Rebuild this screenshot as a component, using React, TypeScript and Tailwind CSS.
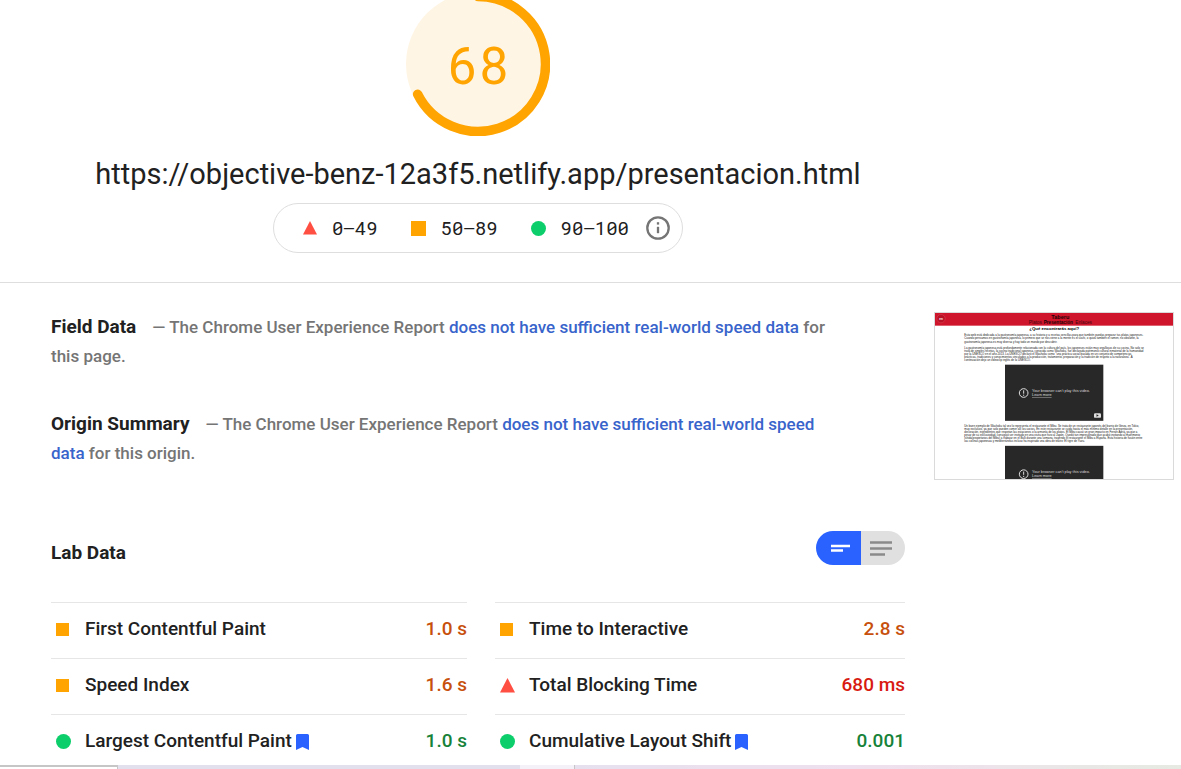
import React from "react";

type Rating = "good" | "average" | "poor";

type Metric = {
  name: string;
  value: string;
  rating: Rating;
  vital?: boolean;
};

const leftMetrics: Metric[] = [
  { name: "First Contentful Paint", value: "1.0 s", rating: "average" },
  { name: "Speed Index", value: "1.6 s", rating: "average" },
  { name: "Largest Contentful Paint", value: "1.0 s", rating: "good", vital: true },
];

const rightMetrics: Metric[] = [
  { name: "Time to Interactive", value: "2.8 s", rating: "average" },
  { name: "Total Blocking Time", value: "680 ms", rating: "poor" },
  { name: "Cumulative Layout Shift", value: "0.001", rating: "good", vital: true },
];

const valueColor: Record<Rating, string> = {
  good: "text-[#178239]",
  average: "text-[#c7500d]",
  poor: "text-[#d81b12]",
};

function RatingMark({ rating }: { rating: Rating }) {
  return (
    <svg viewBox="0 0 15 15" className="size-full" aria-hidden="true">
      {rating === "poor" && <path d="M7.5 0L15 14.5H0z" fill="#ff4e42" />}
      {rating === "average" && <path d="M0 0h15v15H0z" fill="#ffa400" />}
      {rating === "good" && <circle cx="7.5" cy="7.5" r="7.5" fill="#0cce6b" />}
    </svg>
  );
}

function Gauge() {
  return (
    <div className="relative -mt-2 size-36">
      <svg viewBox="0 0 144 144" className="size-full" aria-hidden="true">
        <circle cx="72" cy="72" r="72" fill="#fff5e4" />
        <path
          d="M72 4.5A67.5 67.5 0 1 1 11.6 102.2"
          fill="none"
          stroke="#ffa400"
          strokeWidth="9.5"
          strokeLinecap="round"
        />
      </svg>
      <div className="absolute inset-0 flex items-center justify-center font-['Roboto_Mono','DejaVu_Sans_Mono',monospace] text-[51px] leading-none text-[#ffa400]">
        68
      </div>
    </div>
  );
}

function Legend() {
  const items: { rating: Rating; label: string; size: string }[] = [
    { rating: "poor", label: "0–49", size: "size-[14px]" },
    { rating: "average", label: "50–89", size: "size-[15px]" },
    { rating: "good", label: "90–100", size: "size-[15px]" },
  ];
  return (
    <div className="mt-[11px] flex h-[50px] items-center rounded-full border border-[#dedede] pr-3 pl-[29px]">
      <ul className="flex items-center gap-[33px]">
        {items.map((item) => (
          <li key={item.label} className="flex items-center gap-[15px]">
            <span className={item.size}>
              <RatingMark rating={item.rating} />
            </span>
            <span className="font-['Roboto_Mono','DejaVu_Sans_Mono',monospace] text-[19px] leading-6">
              {item.label}
            </span>
          </li>
        ))}
      </ul>
      <button type="button" aria-label="About the score" className="ml-[17px] size-6">
        <svg viewBox="0 0 24 24" className="size-full" fill="none" stroke="#757575">
          <circle cx="12" cy="12" r="10.7" strokeWidth="2.3" />
          <path d="M12 10.8v6.4" strokeWidth="2.3" />
          <path d="M12 6.2v2.4" strokeWidth="2.3" />
        </svg>
      </button>
    </div>
  );
}

function Summary({ title, target }: { title: string; target: string }) {
  return (
    <section className="text-[17px] leading-[29px] font-medium text-[#757575]">
      <h2 className="mr-4 inline text-[19px] font-bold text-[#212121]">{title}</h2>
      <p className="inline">
        — The Chrome User Experience Report{" "}
        <a href="#report" className="text-[#3864cb]">
          does not have sufficient real-world speed data
        </a>{" "}
        for {target}.
      </p>
    </section>
  );
}

function MetricList({ metrics }: { metrics: Metric[] }) {
  return (
    <ul>
      {metrics.map((metric) => (
        <li
          key={metric.name}
          className="flex h-14 items-center border-t border-[#e6e6e6] pb-0.5 pl-[5px] text-[19px] font-medium"
        >
          <span
            className={
              metric.rating === "average" ? "mr-4 h-[13px] w-[13px]" : "mr-[14px] h-[15px] w-[15px]"
            }
          >
            <RatingMark rating={metric.rating} />
          </span>
          <span>{metric.name}</span>
          {metric.vital && (
            <svg viewBox="0 0 13 16" className="ml-1 h-4 w-[13px]" aria-hidden="true">
              <path d="M0 1.500Q0 0 1.500 0H11.500Q13 0 13 1.500V16L6.500 13L0 16z" fill="#2962ff" />
            </svg>
          )}
          <span className={"ml-auto " + valueColor[metric.rating]}>{metric.value}</span>
        </li>
      ))}
    </ul>
  );
}

function ViewToggle() {
  return (
    <div className="flex h-[34px] overflow-hidden rounded-full">
      <button type="button" aria-label="Compact view" className="w-[45px] bg-[#2962ff]">
        <svg viewBox="0 0 45 34" className="size-full">
          <path d="M15 15h19M15 19.500h12" stroke="#fff" strokeWidth="2.600" />
        </svg>
      </button>
      <button type="button" aria-label="Detailed view" className="w-11 bg-[#e0e0e0]">
        <svg viewBox="0 0 44 34" className="size-full">
          <path d="M9 11.500h22M9 17.500h22M9 23.500h15" stroke="#8a8a8a" strokeWidth="2.400" />
        </svg>
      </button>
    </div>
  );
}

const thumbLines: [number, string][] = [
  [138, "Esta web está dedicada a la gastronomía japonesa, a su historia y a recetas sencillas para que también puedas preparar tus platos japoneses."],
  [158, "Cuando pensamos en gastronomía japonesa, lo primero que se nos viene a la mente es el sushi, o quizá también el ramen, no obstante, la"],
  [178, "gastronomía japonesa es muy diversa y hay todo un mundo por descubrir."],
  [214, "La gastronomía japonesa está profundamente relacionada con la cultura del país, los japoneses están muy orgullosos de su cocina. No solo se"],
  [234, "trata de simples recetas, la cocina tradicional japonesa, conocida como Washoku, fue declarada patrimonio cultural inmaterial de la humanidad"],
  [252, "por la UNESCO en el año 2013. La UNESCO declaró el Washoku como \"una práctica social basada en un conjunto de competencias"],
  [271, "prácticas, tradiciones y conocimientos vinculados a la producción, tratamiento, preparación y la tradición de respeto a la naturaleza\". A"],
  [289, "continuación dejo un videoclip inglés de la UNESCO."],
  [681, "Un buen ejemplo de Washoku tal vez lo representa el restaurante el Mibu. Se trata de un restaurante japonés del barrio de Ginza, en Tokio,"],
  [700, "muy exclusivo, ya que solo pueden comer allí los socios. En este restaurante se cuida hasta el más mínimo detalle en la presentación,"],
  [719, "decoración, ingredientes que respetan las estaciones o la armonía de los platos. El Mibu causó un gran impacto en Ferran Adrià, ya que a"],
  [738, "pesar de su exclusividad, consiguió ser invitado en una visita que hizo al Japón. Quedó tan impresionado que acabó invitando al matrimonio"],
  [757, "Ishida(propietarios del Mibu) a trabajar en el Bulli durante una semana, trayendo el restaurante el Mibu a España. Esta historia de fusión entre"],
  [776, "las cocinas japonesas y mediterráneas incluso ha inspirado una obra de teatro: El tigre de Yuzu."],
];

function Video({ y }: { y: number }) {
  return (
    <g transform={`translate(420 ${y})`}>
      <rect width="590" height="337" fill="#282828" />
      <circle cx="112" cy="170" r="26" fill="none" stroke="#ddd" strokeWidth="6" />
      <path d="M112 154v20M112 180v7" stroke="#ddd" strokeWidth="6" />
      <text x="162" y="162" fontSize="23" fill="#ddd">Your browser can't play this video.</text>
      <text x="162" y="188" fontSize="23" fill="#ddd" textDecoration="underline">Learn more</text>
      <rect x="534" y="291" width="42" height="28" rx="7" fill="#ddd" />
      <path d="M549 298l14 7l-14 7z" fill="#282828" />
    </g>
  );
}

function Thumbnail() {
  return (
    <div className="overflow-hidden border border-[#dadada]">
      <svg
        viewBox="0 0 1428 996"
        className="block w-full font-['Liberation_Sans',sans-serif]"
        role="img"
        aria-label="Page preview"
      >
        <rect width="1428" height="996" fill="#fff" />
        <rect width="1428" height="76" fill="#cf152b" />
        <circle cx="36" cy="34" r="25" fill="#b81226" stroke="#d84a5a" strokeWidth="3" />
        <text x="36" y="41" fontSize="18" fontWeight="700" fill="#fff" textAnchor="middle">en</text>
        <text x="752" y="36" fontSize="33" fontWeight="700" fill="#1d0306" textAnchor="middle">Taberu</text>
        <text x="563" y="67" fontSize="28" fill="#3c0710">Platos</text>
        <text x="652" y="67" fontSize="28" fontWeight="700" fill="#1d0306">Presentación</text>
        <text x="842" y="67" fontSize="28" fill="#3c0710">Enlaces</text>
        <text x="715" y="101" fontSize="26" fontWeight="700" textAnchor="middle">¿Qué encontrarás aquí?</text>
        {thumbLines.map(([y, line]) => (
          <text key={y} x="176" y={y} fontSize="17" fill="#111">{line}</text>
        ))}
        <Video y={310} />
        <Video y={797} />
      </svg>
    </div>
  );
}

export default function App() {
  return (
    <div className="flex h-screen flex-col overflow-hidden bg-white font-['Roboto',sans-serif] text-[#212121]">
      <div className="min-h-0 flex-1 overflow-hidden">
        <header className="flex flex-col items-center border-b border-[#dedede] pr-[225px] pb-[29px]">
          <Gauge />
          <h1 className="mt-[21px] text-[29px] leading-[35px] whitespace-nowrap">
            https://objective-benz-12a3f5.netlify.app/presentacion.html
          </h1>
          <Legend />
        </header>

        <main className="flex items-start gap-[29px] pt-[29px] pr-[7px] pl-[51px]">
          <div className="min-w-0 flex-1">
            <div className="flex flex-col gap-[38px] pr-14">
              <Summary title="Field Data" target="this page" />
              <Summary title="Origin Summary" target="this origin" />
            </div>
            <section className="mt-[63px]">
              <div className="flex items-start justify-between">
                <h2 className="mt-[7px] text-[19px] leading-[29px] font-bold">Lab Data</h2>
                <ViewToggle />
              </div>
              <div className="mt-[35px] grid grid-cols-[416fr_410fr] gap-7">
                <MetricList metrics={leftMetrics} />
                <MetricList metrics={rightMetrics} />
              </div>
            </section>
          </div>
          <aside className="w-60 shrink-0">
            <Thumbnail />
          </aside>
        </main>
      </div>

      <div className="flex h-1 shrink-0" aria-hidden="true">
        <div className="w-[118px] border-t-2 border-r border-[#c6c6c6]" />
        <div className="w-[402px] bg-[#e3e0ee]" />
        <div className="w-[55px] border-r border-[#c6c6c6] bg-[#f4f2f8]" />
        <div className="flex-1 bg-linear-to-r from-[#e6e0ee] via-[#efe0ee] to-[#e6eae2]" />
      </div>
    </div>
  );
}
